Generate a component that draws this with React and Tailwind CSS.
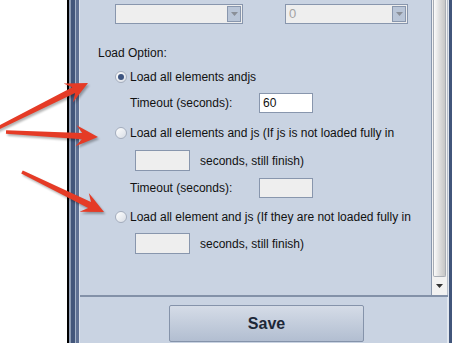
import React from "react";

function arrowPts(x1, y1, x2, y2, headLen = 22, headHalf = 10.5, w0 = 1.8, w1 = 3.2) {
  const dx = x2 - x1, dy = y2 - y1;
  const L = Math.hypot(dx, dy);
  const ux = dx / L, uy = dy / L;
  const nx = -uy, ny = ux;
  const base = [x2 - ux * headLen, y2 - uy * headLen];
  const neck = [x2 - ux * (headLen - 6), y2 - uy * (headLen - 6)];
  const p = (pt, s) => `${(pt[0] + nx * s).toFixed(1)},${(pt[1] + ny * s).toFixed(1)}`;
  return [
    p([x1, y1], w0),
    p(neck, w1),
    p(base, headHalf),
    `${x2},${y2}`,
    p(base, -headHalf),
    p(neck, -w1),
    p([x1, y1], -w0),
  ].join(" ");
}

const arrows = [
  [-4, 129, 88, 83],
  [6, 132, 98, 137],
  [22, 172, 104, 212],
];

function Arrows() {
  return (
    <svg className="absolute left-0 top-0 pointer-events-none" width="452" height="343">
      <defs>
        <filter id="sh" x="-20%" y="-20%" width="140%" height="140%">
          <feGaussianBlur stdDeviation="1.2" />
        </filter>
      </defs>
      {arrows.map((a, i) => (
        <g key={i}>
          <polygon points={arrowPts(a[0] + 1.5, a[1] + 2, a[2] + 1.5, a[3] + 2)} fill="#000" opacity="0.3" filter="url(#sh)" />
          <polygon points={arrowPts(...a)} fill="#e53b26" />
        </g>
      ))}
    </svg>
  );
}

function Combo({ w, value }) {
  return (
    <div className={`flex h-[20px] ${w} border border-[#8896ad] bg-[#eeeeee]`}>
      <div className="flex-1 flex items-center pl-[3px] text-[13px] text-[#a3a3a3]">{value}</div>
      <div className="my-[1px] mr-[1px] w-[14px] border border-[#8896ad] bg-[#b9c5d7] flex items-center justify-center">
        <svg width="7" height="4" viewBox="0 0 7 4"><path d="M0 0H7L3.5 4Z" fill="#8a8f98" /></svg>
      </div>
    </div>
  );
}

function Radio({ checked }) {
  return (
    <div className="w-[12px] h-[12px] rounded-full border border-[#a4adbd] bg-gradient-to-br from-[#ffffff] to-[#d8dde5] flex items-center justify-center shrink-0">
      {checked && <div className="w-[6px] h-[6px] rounded-full bg-[#3d5480]" />}
    </div>
  );
}

function Input({ value, disabled, w = "w-[55px]", h = "h-[21px]" }) {
  return (
    <div className={`${w} ${h} border border-[#8896ad] ${disabled ? "bg-[#eeeeee]" : "bg-white"} flex items-center pl-[3px] text-[12px] text-[#111]`}>
      {value}
    </div>
  );
}

export default function App() {
  return (
    <div className="relative flex h-[343px] w-[452px] overflow-hidden bg-white font-['Liberation_Sans',Arial,sans-serif] text-[12px] text-[#111111]">
      <div className="w-[67px] shrink-0 bg-white" />
      {/* left frame */}
      <div className="w-[2px] bg-black shrink-0" />
      <div className="w-[2px] bg-[#8e9cb3] shrink-0" />
      <div className="w-[4px] bg-[#42567b] shrink-0" />
      <div className="w-[1px] bg-[#a5b3c8] shrink-0" />
      <div className="w-[3px] bg-[#5e7093] shrink-0" />
      <div className="w-[1px] bg-[#dbe2ec] shrink-0" />
      {/* window body */}
      <div className="flex flex-col w-[368px] shrink-0">
        <div className="flex h-[295px]">
          {/* viewport */}
          <div className="w-[351px] bg-[#c9d3e2] flex flex-col pl-[18px]">
            <div className="flex mt-[4px] pl-[17px] gap-[42px]">
              <Combo w="w-[128px]" value="" />
              <Combo w="w-[123px]" value="0" />
            </div>
            <div className="h-[20px] mt-[19px] flex items-center">Load Option:</div>
            <div className="h-[20px] mt-[4px] pl-[17px] flex items-center gap-[3px]">
              <Radio checked />
              <span>Load all elements andjs</span>
            </div>
            <div className="h-[20px] mt-[6px] pl-[32px] flex items-center">
              <span className="w-[129px]">Timeout (seconds):</span>
              <Input value="60" w="w-[54px]" h="h-[20px]" />
            </div>
            <div className="h-[20px] mt-[10px] pl-[17px] flex items-center gap-[3px]">
              <Radio />
              <span>Load all elements and js (If js is not loaded fully in</span>
            </div>
            <div className="h-[21px] mt-[7px] pl-[37px] flex items-center gap-[10px]">
              <Input disabled />
              <span>seconds, still finish)</span>
            </div>
            <div className="h-[20px] mt-[7px] pl-[32px] flex items-center">
              <span className="w-[129px]">Timeout (seconds):</span>
              <Input disabled w="w-[54px]" h="h-[20px]" />
            </div>
            <div className="h-[20px] mt-[9px] pl-[17px] flex items-center gap-[3px]">
              <Radio />
              <span>Load all element and js (If they are not loaded fully in</span>
            </div>
            <div className="h-[21px] mt-[6px] pl-[37px] flex items-center gap-[10px]">
              <Input disabled />
              <span>seconds, still finish)</span>
            </div>
          </div>
          {/* scrollbar */}
          <div className="w-[17px] flex shrink-0">
            <div className="w-[1px] bg-[#8a98ae]" />
            <div className="flex-1 flex flex-col bg-[#f2f2f2] border-r border-[#b8bfca]">
              <div className="h-[277px] mx-[1px] rounded-b-[2px] border border-t-0 border-[#a8adb5] bg-gradient-to-r from-[#fbfbfb] via-[#dedede] to-[#c6c6c6]" />
              <div className="flex-1 flex items-center justify-center">
                <svg width="7" height="4" viewBox="0 0 7 4"><path d="M0 0H7L3.5 4Z" fill="#333" /></svg>
              </div>
            </div>
          </div>
        </div>
        <div className="h-[2px] bg-[#8391a8]" />
        <div className="flex-1 bg-[#c9d3e2] pl-[89px] pt-[8px] border-r border-[#e2e8f0]">
          <div className="w-[195px] h-[37px] rounded-[2px] border border-[#8593aa] bg-gradient-to-b from-[#d5dce7] to-[#b2bed1] flex items-center justify-center text-[16px] font-bold text-[#1d2838]">
            Save
          </div>
        </div>
      </div>
      {/* right frame */}
      <div className="w-[1px] bg-[#dfe5ee] shrink-0" />
      <div className="flex-1 bg-[#42567b]" />
      <Arrows />
    </div>
  );
}
